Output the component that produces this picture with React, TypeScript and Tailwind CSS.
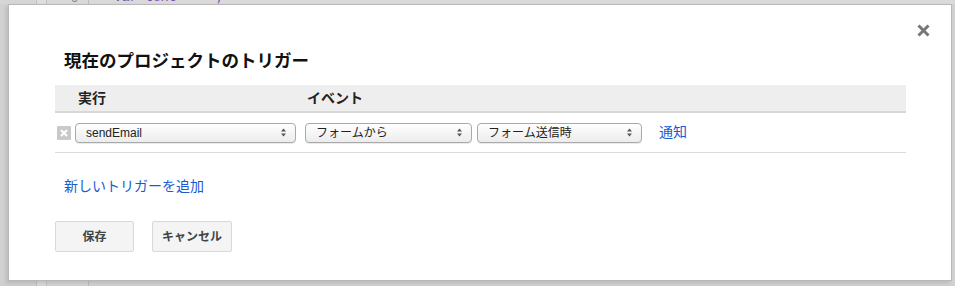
import type { ReactNode } from "react"

const font = "font-['Liberation_Sans','Noto_Sans_CJK_JP',sans-serif]"

function Arrows() {
  return (
    <svg width="5" height="9" viewBox="0 0 5 9" className="shrink-0">
      <path d="M2.5 0.5 L5 3.5 L0 3.5 Z" fill="#555" />
      <path d="M2.5 8.5 L5 5.5 L0 5.5 Z" fill="#555" />
    </svg>
  )
}

function FakeSelect({ width, children }: { width: string; children: ReactNode }) {
  return (
    <div
      className={`flex h-[20px] ${width} shrink-0 items-center justify-between rounded-[4px] border border-[#a9a9a9] bg-gradient-to-b from-white to-[#ececec] pl-[10px] pr-[9px] text-[12px] leading-none text-[#222] shadow-[0_1px_0_rgba(0,0,0,0.08)]`}
    >
      <span>{children}</span>
      <Arrows />
    </div>
  )
}

function RemoveIcon() {
  return (
    <span className="flex h-[14px] w-[14px] shrink-0 items-center justify-center rounded-[1px] bg-[#c9c9c9]">
      <svg width="8" height="8" viewBox="0 0 8 8">
        <path d="M1 1 L7 7 M7 1 L1 7" stroke="#fff" strokeWidth="2" />
      </svg>
    </span>
  )
}

function Button({ width, children }: { width: string; children: ReactNode }) {
  return (
    <button
      className={`h-[31px] ${width} rounded-[2px] border border-[#d9d9d9] bg-[#f4f4f4] text-[12px] font-bold text-[#444]`}
    >
      {children}
    </button>
  )
}

export default function App() {
  return (
    <div className={`flex h-[286px] w-[955px] flex-col overflow-hidden bg-[#d2d2d2] ${font}`}>
      {/* editor behind the dialog */}
      <div className="flex h-[4px] shrink-0 overflow-hidden">
        <div className="w-[37px] border-r border-[#c4c4c4] bg-[#d6d6d6]" />
        <div className="w-[10px] border-r border-[#c4c4c4] bg-[#dedede]" />
        <div className="flex w-[42px] items-end justify-end border-r border-[#bdbdbd] bg-[#d9d9d9] pr-[10px]">
          <span className="-mb-[1px] text-[13px] leading-[14px] text-[#888]">6</span>
        </div>
        <div className="flex flex-1 items-end bg-[#dadada] pl-[25px]">
          <span className="-mb-[1px] font-['Liberation_Mono',monospace] text-[13px] leading-[14px] text-[#7a4fb0]">
            var text = '';
          </span>
        </div>
      </div>

      <div className="relative ml-[8px] h-[277px] w-[944px] shrink-0 border border-[#b8b8b8] bg-white shadow-[-2px_2px_4px_rgba(0,0,0,0.12)]">
        <svg
          width="13"
          height="13"
          viewBox="0 0 13 13"
          className="absolute right-[21px] top-[19px]"
        >
          <path d="M1.5 1.5 L11.5 11.5 M11.5 1.5 L1.5 11.5" stroke="#777" strokeWidth="3" />
        </svg>

        <div className="px-[46px] pt-[44px]">
          <h2 className="pl-[9px] text-[17.5px] font-bold leading-[24px] text-[#111]">
            現在のプロジェクトのトリガー
          </h2>

          {/* table */}
          <div className="mt-[12px] w-[851px]">
            <div className="flex h-[28px] items-center border-b-2 border-[#d8d8d8] bg-[#eeeeee] text-[14px] font-bold text-[#222]">
              <div className="w-[250px] pl-[23px]">実行</div>
              <div className="pl-[2px]">イベント</div>
            </div>
            <div className="flex h-[40px] items-center border-b border-[#dcdcdc] pl-[2px]">
              <RemoveIcon />
              <div className="ml-[4px]">
                <FakeSelect width="w-[221px]">sendEmail</FakeSelect>
              </div>
              <div className="ml-[9px]">
                <FakeSelect width="w-[167px]">フォームから</FakeSelect>
              </div>
              <div className="ml-[5px]">
                <FakeSelect width="w-[165px]">フォーム送信時</FakeSelect>
              </div>
              <a className="ml-[17px] text-[14px] text-[#1a5bd0]">通知</a>
            </div>
          </div>

          <a className="mt-[23px] block pl-[9px] text-[14px] leading-[20px] text-[#1a5bd0]">
            新しいトリガーを追加
          </a>

          <div className="mt-[25px] flex gap-[18px]">
            <Button width="w-[79px]">保存</Button>
            <Button width="w-[80px]">キャンセル</Button>
          </div>
        </div>
      </div>

      <div className="flex flex-1 overflow-hidden">
        <div className="w-[37px] border-r border-[#c0c0c0] bg-[#cfcfcf]" />
        <div className="w-[10px] border-r border-[#c0c0c0] bg-[#d8d8d8]" />
        <div className="w-[42px] border-r border-[#bcbcbc] bg-[#d3d3d3]" />
        <div className="flex-1 bg-[#d2d2d2]" />
      </div>
    </div>
  )
}
